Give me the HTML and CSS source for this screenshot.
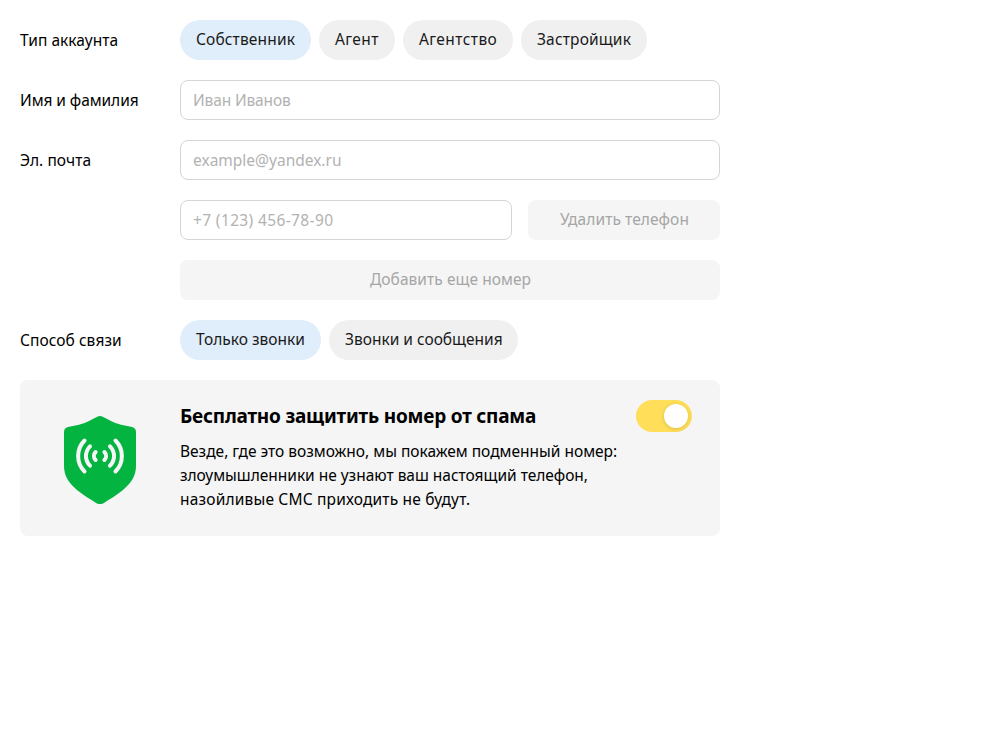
FILE: index.html
```html
<!DOCTYPE html>
<html lang="ru">
<head>
<meta charset="utf-8">
<title>Настройки аккаунта</title>
<link rel="stylesheet" href="styles.css">
</head>
<body>
<form class="settings">
  <div class="row">
    <span class="label label-type">Тип аккаунта</span>
    <div class="pills">
      <button type="button" class="pill pill-owner pill-active">Собственник</button>
      <button type="button" class="pill pill-agent">Агент</button>
      <button type="button" class="pill pill-agency">Агентство</button>
      <button type="button" class="pill pill-developer">Застройщик</button>
    </div>
  </div>
  <div class="row">
    <label class="label label-name" for="name">Имя и фамилия</label>
    <input class="field field-name" id="name" type="text" placeholder="Иван Иванов">
  </div>
  <div class="row">
    <label class="label label-mail" for="mail">Эл. почта</label>
    <input class="field" id="mail" type="text" placeholder="example@yandex.ru">
  </div>
  <div class="row">
    <span class="label"></span>
    <div class="phone">
      <input class="field field-phone" type="text" placeholder="+7 (123) 456-78-90">
      <button type="button" class="button button-remove" disabled>Удалить телефон</button>
    </div>
  </div>
  <div class="row">
    <span class="label"></span>
    <button type="button" class="button button-add" disabled>Добавить еще номер</button>
  </div>
  <div class="row">
    <span class="label label-contact">Способ связи</span>
    <div class="pills">
      <button type="button" class="pill pill-calls pill-active">Только звонки</button>
      <button type="button" class="pill pill-messages">Звонки и сообщения</button>
    </div>
  </div>
  <section class="promo">
    <div class="promo-icon">
      <svg width="72" height="88" viewBox="0 0 72 88" fill="none">
        <path fill="#04b440" d="M33.2.8Q36-.7 38.8.8L47 4.9Q52 7.6 57 8.7L68 10.9Q72 11.8 72 16V50C72 60 67 67 59 74C53 79 46 83 39.5 87.2Q36 89 32.500 87.200C26 83 19 79 13 74C5 67 0 60 0 50V16Q0 11.800 4 10.900L15 8.700Q20 7.600 25 4.900Z"/>
        <g stroke="#f5f5f5" stroke-width="4" stroke-linecap="round">
          <path d="M20.500 24.500C12 33.200 12 46.800 20.500 55.500M26 30.300C20.600 35.800 20.600 44.200 26 49.700M31.600 36C29.400 38.300 29.400 41.700 31.600 44"/>
          <path d="M51.500 24.500C60 33.200 60 46.800 51.500 55.500M46 30.300C51.400 35.800 51.400 44.200 46 49.700M40.400 36C42.600 38.300 42.600 41.700 40.400 44"/>
        </g>
      </svg>
    </div>
    <div class="promo-body">
      <div class="promo-head">
        <h2 class="promo-title">Бесплатно защитить номер от спама</h2>
        <span class="toggle" role="switch" aria-checked="true"><span class="toggle-knob"></span></span>
      </div>
      <p class="promo-text">Везде, где это возможно, мы покажем подменный номер:<br><span class="promo-middle">злоумышленники не узнают ваш настоящий телефон,</span><br><span class="promo-last">назойливые СМС приходить не будут.</span></p>
    </div>
  </section>
</form>
</body>
</html>
```

FILE: styles.css
```css
* { box-sizing: border-box; }

body {
  margin: 0;
  background: #fff;
  color: #000;
  font: 15.5px/24px "Noto Sans", sans-serif;
}

.settings {
  display: flex;
  flex-direction: column;
  gap: 20px;
  width: 740px;
  padding: 20px;
}

.row { display: flex; height: 40px; }

.label {
  flex: 0 0 160px;
  line-height: 40px;
}
.label-type { letter-spacing: .05px; }
.label-name { letter-spacing: -.07px; }
.label-mail, .label-contact { letter-spacing: .06px; }

.pills { display: flex; gap: 8px; }

.pill, .button {
  height: 40px;
  padding: 0 0 2px;
  border: 0;
  font: inherit;
  line-height: 38px;
  white-space: nowrap;
}

.pill {
  padding-left: 16px;
  border-radius: 20px;
  background: #f0f0f0;
  color: #1a1a1a;
  text-align: left;
}
.pill-active { background: #e0edfb; }
.pill-owner { width: 131px; letter-spacing: .15px; }
.pill-agent { width: 76px; letter-spacing: .42px; }
.pill-agency { width: 110px; letter-spacing: .42px; }
.pill-developer { width: 126px; letter-spacing: .16px; }
.pill-calls { width: 141px; }
.pill-messages { width: 189px; }

.field {
  flex: 1;
  min-width: 0;
  height: 40px;
  padding: 0 12px;
  border: 1px solid #d5d5d5;
  border-radius: 8px;
  background: #fff;
  font: inherit;
}
.field::placeholder { color: #b2b2b2; opacity: 1; }
.field-name { letter-spacing: -.14px; }
.field-phone { letter-spacing: .37px; }

.phone { display: flex; flex: 1; gap: 16px; }

.button {
  border-radius: 8px;
  background: #f5f5f5;
  color: #a6a6a6;
}
.button-remove { width: 192px; padding-left: 1px; letter-spacing: .08px; }
.button-add { flex: 1; padding-left: 1px; letter-spacing: .06px; }

.promo {
  display: flex;
  height: 156px;
  border-radius: 8px;
  background: #f5f5f5;
}
.promo-icon {
  flex: 0 0 160px;
  padding: 36px 0 0 44px;
}
.promo-body { flex: 1; padding: 20px 28px 0 0; }
.promo-head {
  display: flex;
  justify-content: space-between;
  height: 32px;
}
.promo-title {
  margin: 0;
  font-size: 19px;
  font-weight: 700;
  line-height: 32px;
  letter-spacing: -.21px;
}
.promo-text { margin: 7px 0 0; white-space: nowrap; }
.promo-middle { letter-spacing: -.02px; }
.promo-last { letter-spacing: .18px; }

.toggle {
  display: flex;
  justify-content: flex-end;
  width: 56px;
  height: 32px;
  padding: 4px;
  border-radius: 16px;
  background: #ffde5a;
}
.toggle-knob {
  width: 24px;
  height: 24px;
  border-radius: 50%;
  background: #fff;
  box-shadow: 0 1px 4px rgba(0, 0, 0, .15);
}
```
